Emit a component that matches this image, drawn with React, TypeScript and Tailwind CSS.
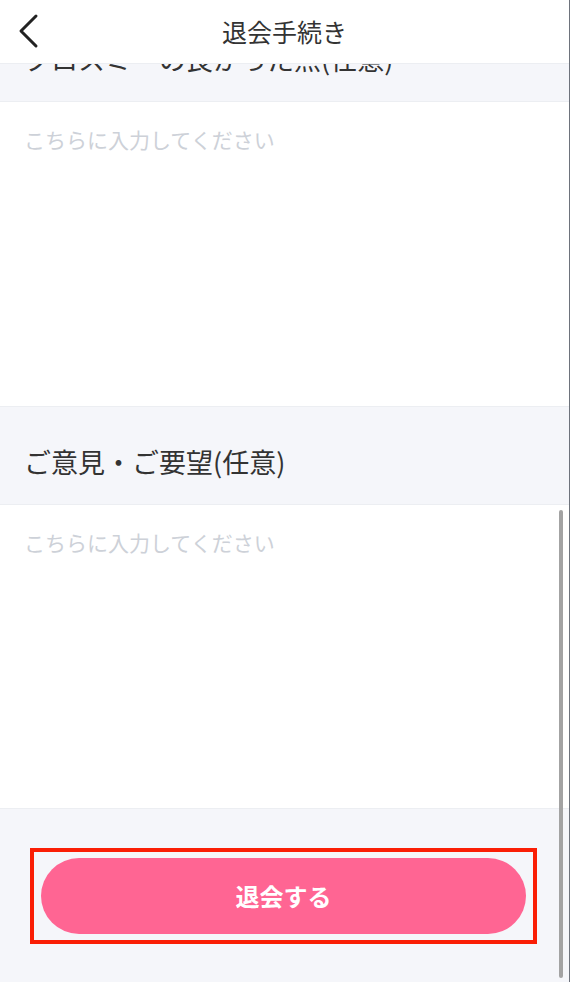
import { ChangeEvent, useState } from 'react';

const FONT = { fontFamily: '"Noto Sans CJK JP", "Noto Sans", sans-serif' };

function SectionLabel({ children }: { children: string }) {
  return (
    <div className="h-[98px] bg-[#f5f6fa] flex items-center pt-[12px] px-[24px] border-b border-[#eceef2]">
      <span className="text-[27px] leading-none text-[#333333]">{children}</span>
    </div>
  );
}

function Field({ value, onChange, height }: { value: string; onChange: (v: string) => void; height: string }) {
  return (
    <textarea
      value={value}
      onChange={(e: ChangeEvent<HTMLTextAreaElement>) => onChange(e.target.value)}
      placeholder="こちらに入力してください"
      className={`${height} block w-full resize-none bg-white px-[24px] pt-[25px] text-[21px] leading-[24px] text-[#333333] placeholder:text-[#cdd1d8] outline-none`}
    />
  );
}

export default function App() {
  const [good, setGood] = useState('');
  const [opinion, setOpinion] = useState('');

  return (
    <div style={FONT} className="relative h-[982px] w-[570px] overflow-hidden bg-[#f5f6fa] border-r border-[#6e737c]">
      {/* header sits over the scrolled content */}
      <header className="absolute top-0 left-0 right-0 z-10 h-[64px] bg-white border-b border-[#eceef2] flex items-center justify-center">
        <button className="absolute left-[12px] top-[10px] p-[2px]" aria-label="戻る">
          <svg width="28" height="38" viewBox="0 0 28 38" fill="none">
            <polyline points="22,4 7,19 22,34" stroke="#222222" strokeWidth="3" strokeLinecap="round" strokeLinejoin="round" />
          </svg>
        </button>
        <h1 className="text-[25px] leading-none text-[#333333]">退会手続き</h1>
      </header>

      <div className="pt-[4px]">
        <SectionLabel>クロスミーの良かった点(任意)</SectionLabel>
        <Field value={good} onChange={setGood} height="h-[304px]" />
        <div className="h-px bg-[#eceef2]" />
        <SectionLabel>ご意見・ご要望(任意)</SectionLabel>
        <Field value={opinion} onChange={setOpinion} height="h-[303px]" />
        <div className="h-px bg-[#eceef2]" />

        <div className="pt-[39px] pl-[30px] pr-[32px]">
          <div className="border-4 border-[#fa1e05] px-[7px] py-[6px]">
            <button className="h-[76px] w-full rounded-full bg-[#ff6593] text-white text-[24px] font-bold">
              退会する
            </button>
          </div>
        </div>
      </div>

      <div className="absolute right-[6px] top-[510px] h-[468px] w-[4px] rounded-full bg-[#a3a3a3]" />
    </div>
  );
}
